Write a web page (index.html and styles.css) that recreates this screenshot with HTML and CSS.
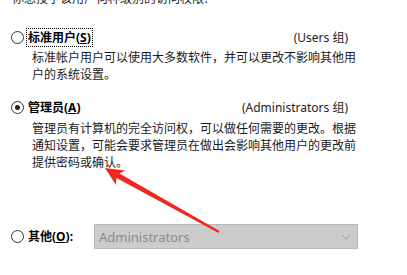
FILE: index.html
```html
<!DOCTYPE html>
<html lang="zh-CN">
<head>
  <meta charset="UTF-8" />
  <title>访问权限</title>
  <link rel="stylesheet" href="styles.css">
</head>
<body>

  <div class="question">你想授予该用户何种级别的访问权限?</div>

  <div class="option first">
    <span class="radio"></span>
    <span class="label focused">标准用户(<u>S</u>)</span>
    <span class="group">(Users 组)</span>
  </div>
  <p class="desc">标准帐户用户可以使用大多数软件，并可以更改不影响其他用户的系统设置。</p>

  <div class="option second">
    <span class="radio checked"></span>
    <span class="label">管理员(<u>A</u>)</span>
    <span class="group">(Administrators 组)</span>
  </div>
  <p class="desc">管理员有计算机的完全访问权，可以做任何需要的更改。根据通知设置，可能会要求管理员在做出会影响其他用户的更改前提供密码或确认。</p>

  <div class="option other">
    <span class="radio"></span>
    <span class="label other-label">其他(<u>O</u>):</span>
    <div class="select">
      <span>Administrators</span>
      <svg width="10" height="6" viewBox="0 0 10 6"><polyline points="1,1 5,5 9,1" fill="none" stroke="#9a9a9a" stroke-width="1"/></svg>
    </div>
  </div>

  <!-- red annotation arrow -->
  <svg class="arrow" width="407" height="275" viewBox="0 0 407 275">
    <polygon points="105,168 125,170.5 119.5,173.5 219.5,231 218.5,233 116.5,178 116,185" fill="#ee2a1e"/>
  </svg>

</body>
</html>
```

FILE: styles.css
```css
body {
  margin: 0;
  font-family: "Noto Sans", "Noto Sans CJK SC", sans-serif;
  font-size: 12px;
  color: #1a1a1a;
  background-color: #fff;
  position: relative;
  overflow: hidden;
  height: 275px;
}
.question {
  margin-top: -10px;
  padding-left: 12px;
  line-height: 17px;
}
.option {
  display: flex;
  align-items: center;
  width: 348px;
  padding-left: 11px;
  box-sizing: border-box;
  height: 20px;
}
.option.first {
  margin-top: 20px;
}
.option.second {
  margin-top: 14px;
}
.option.other {
  margin-top: 53px;
  width: 358px;
  height: 25px;
}
.radio {
  width: 11px;
  height: 11px;
  border: 1px solid #333;
  border-radius: 50%;
  position: relative;
  flex-shrink: 0;
}
.radio.checked::after {
  content: "";
  position: absolute;
  left: 3px;
  top: 3px;
  width: 5px;
  height: 5px;
  border-radius: 50%;
  background-color: #222;
}
.label {
  font-weight: bold;
  margin-left: 3px;
  padding: 0 1px;
  line-height: 17px;
  color: #000;
}
.label.focused {
  outline: 1px dotted #000;
}
.other-label {
  width: 65px;
}
.group {
  margin-left: auto;
  color: #222;
}
.desc {
  margin: 2px 0 0 32px;
  width: 326px;
  line-height: 17px;
}
.second + .desc {
  margin-top: 3px;
}
.select {
  flex: 1;
  height: 25px;
  box-sizing: border-box;
  background-color: #cccccc;
  border: 1px solid #b9b9b9;
  display: flex;
  align-items: center;
  justify-content: space-between;
  padding: 0 6px 0 4px;
  color: #8a8a8a;
  font-size: 13px;
}
.arrow {
  position: absolute;
  left: 0;
  top: 0;
  pointer-events: none;
}
```
